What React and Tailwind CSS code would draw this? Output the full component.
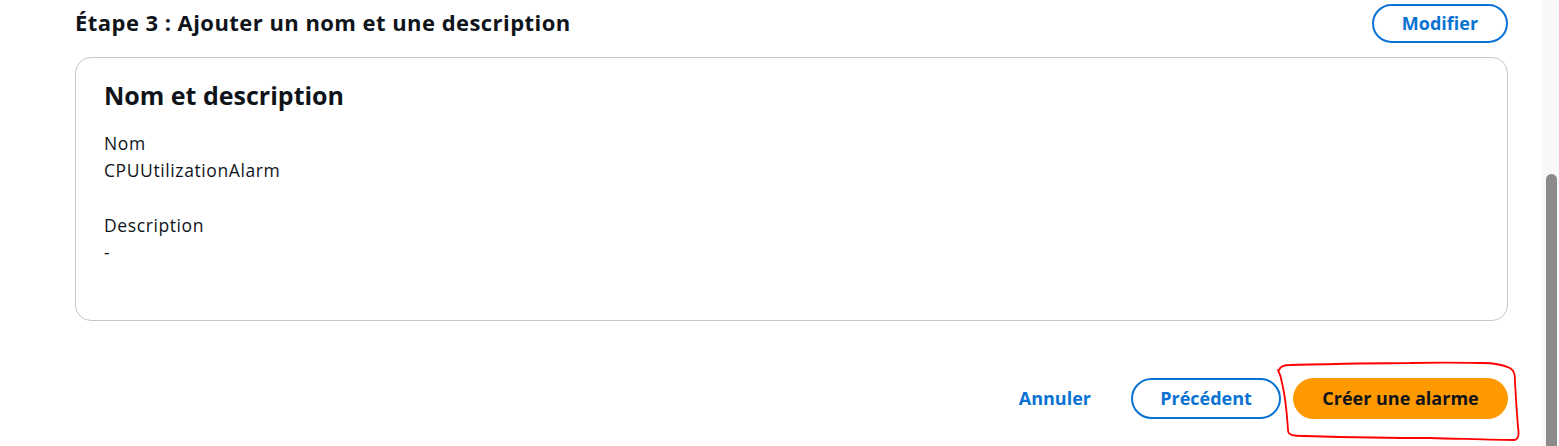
export default function App() {
  return (
    <div className="relative flex h-[446px] w-[1559px] overflow-hidden bg-white font-['Open_Sans',sans-serif] text-[#0f141a]">
      <div className="flex-1 pl-[75px] pr-[34px] pt-[4px]">
        <div className="flex items-center justify-between">
          <h2 className="mb-[4px] text-[22px] font-bold leading-[26px] tracking-[0.45px]">Étape 3 : Ajouter un nom et une description</h2>
          <button className="h-[39px] w-[136px] rounded-full border-2 border-[#0972d3] text-[18px] font-bold text-[#0972d3]">
            Modifier
          </button>
        </div>

        <div className="mt-[14px] h-[264px] rounded-[16px] border border-[#c6c6cd] px-[28px] pt-[21px]">
          <h3 className="text-[25px] font-bold leading-[32px]">Nom et description</h3>
          <div className="mt-[19px] text-[17.5px] leading-[27px] tracking-[0.6px]">
            <div>Nom</div>
            <div>CPUUtilizationAlarm</div>
          </div>
          <div className="mt-[28px] text-[17.5px] leading-[27px] tracking-[0.6px]">
            <div>Description</div>
            <div>-</div>
          </div>
        </div>

        <div className="mt-[57px] flex items-center justify-end">
          <button className="mr-[40px] text-[18px] font-bold text-[#0972d3]">Annuler</button>
          <button className="h-[41px] w-[150px] rounded-full border-2 border-[#0972d3] text-[18px] font-bold text-[#0972d3]">
            Précédent
          </button>
          <button className="ml-[12px] h-[41px] w-[215px] rounded-full bg-[#ff9900] text-[18px] font-bold text-[#0f141a]">
            Créer une alarme
          </button>
        </div>
      </div>

      <div className="w-[17px] bg-[#f8f8f8] pl-[4px] pr-[2px] pt-[174px]">
        <div className="h-full rounded-t-full bg-[#8b8b8b]" />
      </div>

      <svg className="pointer-events-none absolute left-[1270px] top-[350px]" width="270" height="96" viewBox="0 0 270 96" fill="none">
        <path
          d="M9 20 C10 17 14 15 20 15 C60 14 100 13 140 13 C180 12 200 13 213 13 C225 13 233 15 240 18 C245 21 245 26 245 32 C246 50 247 65 248 77 C249 84 249 88 245 90 C230 90 200 89 160 88 C110 88 70 87 35 86 C22 86 18 85 18 80 C17 65 15 45 12 33 C11 26 9 22 8 20"
          stroke="#ff0000"
          strokeWidth="1.8"
          strokeLinecap="round"
          strokeLinejoin="round"
        />
      </svg>
    </div>
  );
}
